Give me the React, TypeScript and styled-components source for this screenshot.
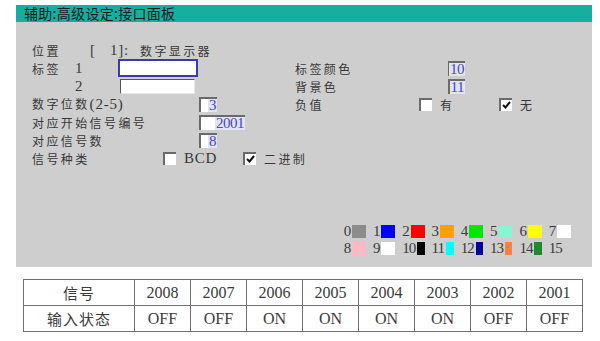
import styled, {createGlobalStyle} from 'styled-components'

const Global = createGlobalStyle`
  body {
    margin: 0;
    background: #ffffff;
    font-family: "Liberation Serif", "Noto Sans CJK SC", serif;
  }
`

const Page = styled.div`
  padding: 5px 8px 0 16px;
`

const Panel = styled.section`
  width: 576px;
  height: 262px;
  background: #cecece;
  display: flex;
  flex-direction: column;
`

const TitleBar = styled.div`
  height: 17px;
  line-height: 17px;
  background: #16ae9e;
  color: #1c1c1c;
  font-family: "Noto Sans CJK SC", sans-serif;
  font-size: 14px;
  letter-spacing: 0.3px;
  padding-left: 8px;
`

const Body = styled.div`
  flex: 1;
  display: flex;
  flex-direction: column;
  padding: 19px 14px 10px 16px;
`

const Form = styled.div`
  display: flex;
  align-items: flex-start;
`

const Column = styled.div<{$w?: number; $top?: number}>`
  width: ${p => (p.$w ? `${p.$w}px` : 'auto')};
  margin-top: ${p => p.$top ?? 0}px;
  display: flex;
  flex-direction: column;
`

const Row = styled.div`
  height: 18px;
  line-height: 15px;
  display: flex;
  align-items: center;
  color: #383838;
  font-family: "Noto Sans CJK SC", sans-serif;
  font-size: 12px;
  letter-spacing: 2.4px;
`

const Cell = styled.span<{$w: number}>`
  width: ${p => p.$w}px;
  flex: none;
  white-space: nowrap;
`

const Latin = styled.span`
  font-family: "Liberation Serif", serif;
  font-size: 15px;
  letter-spacing: 0.8px;
`

const TextInput = styled.div<{$focus?: boolean; $w: number; $h: number}>`
  width: ${p => p.$w}px;
  height: ${p => p.$h}px;
  box-sizing: border-box;
  background: #ffffff;
  ${p =>
    p.$focus
      ? 'border: 2px solid #3b3ba6;'
      : 'border-top: 1px solid #555; border-left: 1px solid #555; border-right: 1px solid #e8e8e8; border-bottom: 1px solid #e8e8e8;'}
`

const NumBox = styled.div<{$w: number}>`
  width: ${p => p.$w}px;
  height: 15px;
  box-sizing: border-box;
  background: #ffffff;
  border-top: 2px solid #6a6a6a;
  border-left: 2px solid #6a6a6a;
  display: flex;
  justify-content: flex-end;
  align-items: center;
  font-family: "Liberation Serif", serif;
  font-size: 15px;
  letter-spacing: -0.5px;
  color: #4646c8;
  line-height: 13px;
`

const NumValue = styled.span`
  background: #e3e3f6;
  padding: 0 1px;
`

const Box = styled.span`
  width: 13px;
  height: 13px;
  box-sizing: border-box;
  flex: none;
  background: #ffffff;
  border-top: 2px solid #6a6a6a;
  border-left: 2px solid #6a6a6a;
  display: flex;
  align-items: center;
  justify-content: center;
`

const Option = styled.span<{$w?: number}>`
  display: flex;
  align-items: center;
  gap: 8px;
  width: ${p => (p.$w ? `${p.$w}px` : 'auto')};
  flex: none;
`

const Check = ({on}: {on?: boolean}) => (
  <Box>
    {on && (
      <svg width="9" height="8" viewBox="0 0 9 8">
        <path d="M1 4 L3.5 6.5 L8 1" fill="none" stroke="#111" strokeWidth="2" />
      </svg>
    )}
  </Box>
)

const Palette = styled.div`
  margin-top: auto;
  align-self: flex-end;
  display: grid;
  grid-template-columns: repeat(8, 29.3px);
  grid-auto-rows: 17px;
`

const Swatch = styled.span<{$c: string}>`
  display: flex;
  align-items: center;
  justify-content: flex-end;
  padding-right: 7px;
  font-family: "Liberation Serif", serif;
  font-size: 15px;
  letter-spacing: -1px;
  color: #3a3a3a;

  &::after {
    content: '';
    width: 14px;
    height: 13px;
    margin-left: 2px;
    background: ${p => p.$c};
  }
`

const Table = styled.table`
  margin: 12px 0 0 7px;
  border-collapse: collapse;
  color: #3a3a3a;
  font-family: "Liberation Serif", "Noto Sans CJK SC", serif;
  font-size: 16px;

  td {
    border: 1px solid #707070;
    height: 25px;
    padding: 0;
    text-align: center;
    width: 55px;
  }
`

const HeadCell = styled.td`
  && {
    width: 110px;
    letter-spacing: 1px;
    font-family: "Noto Sans CJK SC", sans-serif;
    font-size: 15px;
  }
`

const colors = [
  '#8c8c8c', '#0000ff', '#ff0000', '#ffa000', '#00e800', '#88f5d0', '#ffff00', '#ffffff',
  '#ffb8c4', '#ffffff', '#000000', '#00ffff', '#00009c', '#ff8040', '#208a2a', 'transparent',
]

const signals = ['2008', '2007', '2006', '2005', '2004', '2003', '2002', '2001']
const states = ['OFF', 'OFF', 'ON', 'ON', 'ON', 'ON', 'OFF', 'OFF']

export default function App() {
  return (
    <Page>
      <Global />
      <Panel>
        <TitleBar>辅助:高级设定:接口面板</TitleBar>
        <Body>
          <Form>
            <Column $w={263}>
              <Row>
                <Cell $w={58}>位置</Cell>
                <Cell $w={20}><Latin>[</Latin></Cell>
                <Cell $w={30}><Latin>1]:</Latin></Cell>
                <span>数字显示器</span>
              </Row>
              <Row>
                <Cell $w={43}>标签</Cell>
                <Cell $w={43}><Latin>1</Latin></Cell>
                <TextInput $focus $w={80} $h={18} />
              </Row>
              <Row>
                <Cell $w={43} />
                <Cell $w={45}><Latin>2</Latin></Cell>
                <TextInput $w={75} $h={15} />
              </Row>
              <Row>
                <Cell $w={167}>数字位数<Latin>(2-5)</Latin></Cell>
                <NumBox $w={18}><NumValue>3</NumValue></NumBox>
              </Row>
              <Row>
                <Cell $w={167}>对应开始信号编号</Cell>
                <NumBox $w={46}><NumValue>2001</NumValue></NumBox>
              </Row>
              <Row>
                <Cell $w={167}>对应信号数</Cell>
                <NumBox $w={18}><NumValue>8</NumValue></NumBox>
              </Row>
              <Row>
                <Cell $w={131}>信号种类</Cell>
                <Option $w={80}><Check /><Latin>BCD</Latin></Option>
                <Option><Check on />二进制</Option>
              </Row>
            </Column>
            <Column $top={18}>
              <Row>
                <Cell $w={153}>标签颜色</Cell>
                <NumBox $w={17}><NumValue>10</NumValue></NumBox>
              </Row>
              <Row>
                <Cell $w={153}>背景色</Cell>
                <NumBox $w={17}><NumValue>11</NumValue></NumBox>
              </Row>
              <Row>
                <Cell $w={124}>负值</Cell>
                <Option $w={80}><Check />有</Option>
                <Option><Check on />无</Option>
              </Row>
            </Column>
          </Form>
          <Palette>
            {colors.map((c, i) => (
              <Swatch key={i} $c={c}>{i}</Swatch>
            ))}
          </Palette>
        </Body>
      </Panel>
      <Table>
        <tbody>
          <tr>
            <HeadCell>信号</HeadCell>
            {signals.map(s => <td key={s}>{s}</td>)}
          </tr>
          <tr>
            <HeadCell>输入状态</HeadCell>
            {states.map((s, i) => <td key={i}>{s}</td>)}
          </tr>
        </tbody>
      </Table>
    </Page>
  )
}
